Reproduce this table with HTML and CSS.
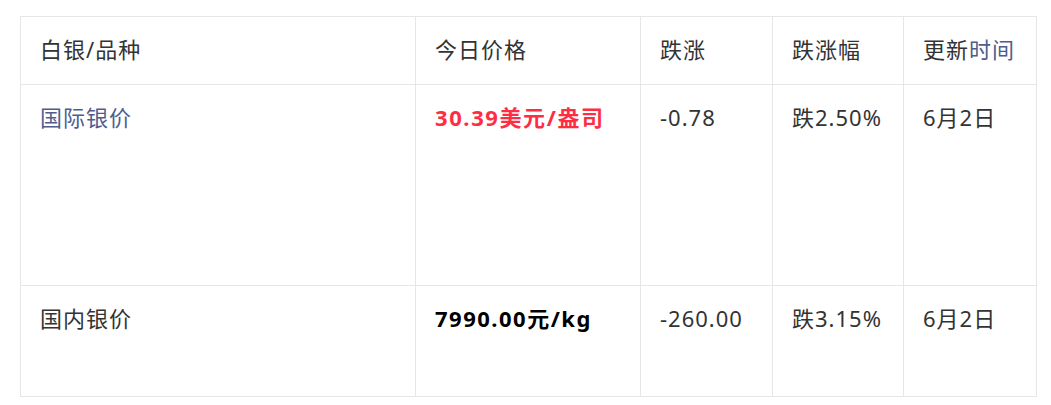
FILE: index.html
```html
<!DOCTYPE html>
<html lang="zh">
<head>
<meta charset="utf-8">
<title>白银价格</title>
<link rel="stylesheet" href="styles.css">
</head>
<body>
<table class="price-table">
  <colgroup>
    <col class="c1"><col class="c2"><col class="c3"><col class="c4"><col class="c5">
  </colgroup>
  <tr class="head">
    <td>白银/品种</td>
    <td>今日价格</td>
    <td>跌涨</td>
    <td>跌涨幅</td>
    <td>更新<a class="link" href="#">时间</a></td>
  </tr>
  <tr class="row1">
    <td><a class="link" href="#">国际银价</a></td>
    <td><strong class="red">30.39美元/盎司</strong></td>
    <td>-0.78</td>
    <td>跌2.50%</td>
    <td>6月2日</td>
  </tr>
  <tr class="row2">
    <td>国内银价</td>
    <td><strong class="black">7990.00元/kg</strong></td>
    <td>-260.00</td>
    <td>跌3.15%</td>
    <td>6月2日</td>
  </tr>
</table>
</body>
</html>
```
FILE: styles.css
```css
html, body {
  margin: 0;
  padding: 0;
  background: #fff;
}
body {
  padding: 16px 0 0 20px;
  font-family: "Noto Sans", "Noto Sans CJK SC", sans-serif;
  font-size: 22px;
  letter-spacing: 1px;
  color: #333;
}
.price-table {
  border-collapse: collapse;
  table-layout: fixed;
  width: 1016px;
}
.c1 { width: 395px; }
.c2 { width: 225px; }
.c3 { width: 132px; }
.c4 { width: 131px; }
.c5 { width: 133px; }
.price-table td {
  border: 1px solid #e6e6e6;
  padding: 18px 10px 0 19px;
  vertical-align: top;
  line-height: 28px;
  white-space: nowrap;
  overflow: hidden;
}
.head td { height: 49px; }
.row1 td { height: 182px; }
.row2 td { height: 92px; }
.link {
  color: #4f5d8e;
  text-decoration: none;
}
.red {
  color: #ff2d43;
  font-weight: 700;
  letter-spacing: 1.6px;
}
.black {
  color: #000;
  font-weight: 700;
  letter-spacing: 1.5px;
}
```
